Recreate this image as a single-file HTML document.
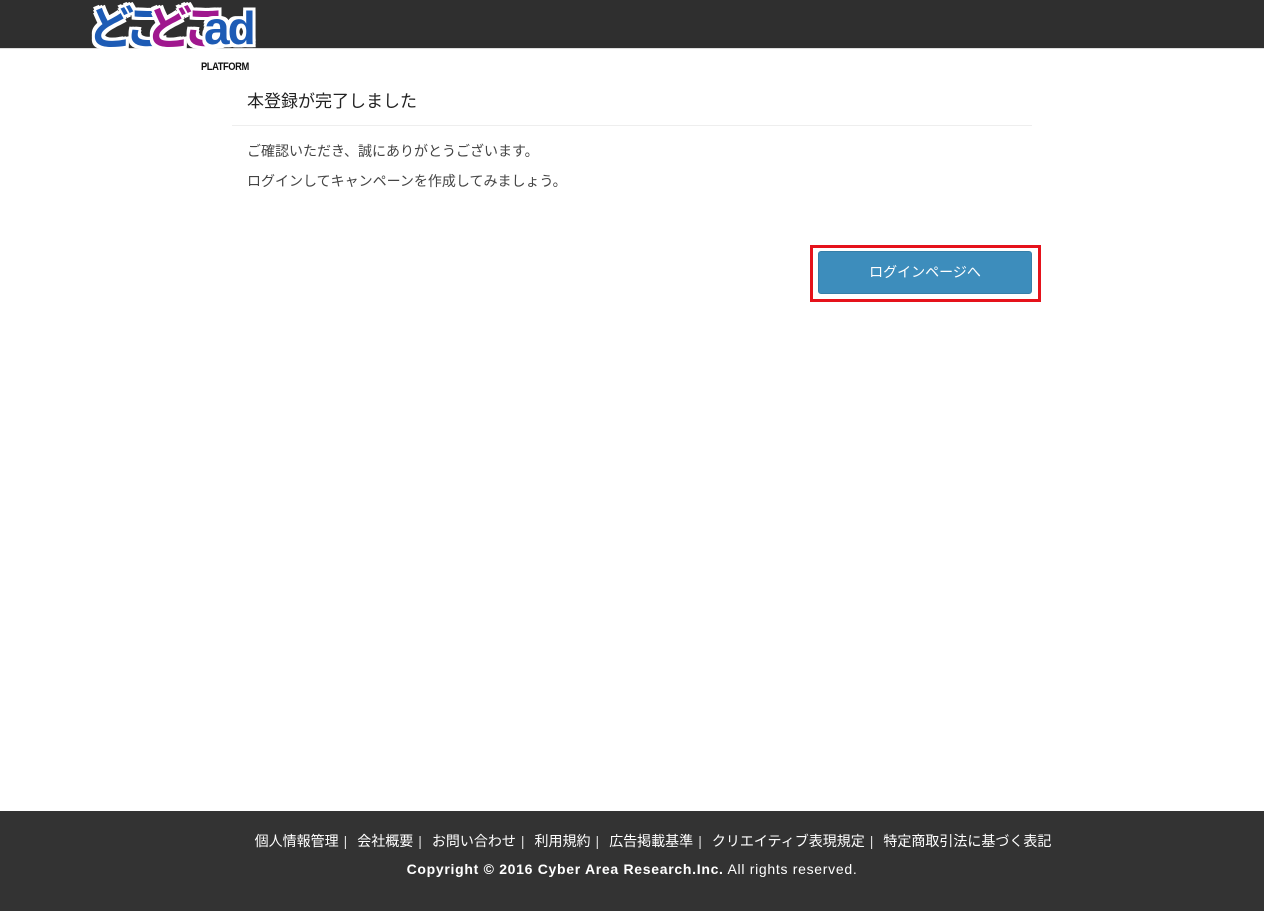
<!DOCTYPE html>
<html><head><meta charset="utf-8"><style>
*{margin:0;padding:0;box-sizing:border-box}
html,body{width:1264px;height:911px;background:#fff;font-family:"Liberation Sans","Noto Sans CJK JP",sans-serif;position:relative;overflow:hidden}
.hdr{position:absolute;left:0;top:0;width:1264px;height:49px;background:#2f2f2f;border-bottom:1px solid #ddd}
.logo{position:absolute;left:86px;top:2px;width:170px;height:72px}
.logo .j{position:absolute;top:-2px;font-weight:bold;font-size:46px;line-height:56px;letter-spacing:-8px;
 text-shadow:-3px -3px 0 #fff,3px -3px 0 #fff,-3px 3px 0 #fff,3px 3px 0 #fff,0 3px 0 #fff,0 -3px 0 #fff,3px 0 0 #fff,-3px 0 0 #fff}
.logo .p{position:absolute;left:115px;top:59px;font-size:11px;font-weight:bold;color:#111;letter-spacing:-0.5px;transform:scaleX(.85);transform-origin:left}
h1{position:absolute;left:247px;top:87px;font-size:17px;font-weight:normal;color:#222}
.hr{position:absolute;left:232px;top:125px;width:800px;height:1px;background:#eee}
.t{position:absolute;left:247px;font-size:14px;color:#444}
.box{position:absolute;left:810px;top:245px;width:231px;height:57px;border:3px solid #e5121b}
.btn{position:absolute;left:818px;top:251px;width:214px;height:43px;background:#3d8dbc;border:1px solid #367fa9;border-radius:3px;color:#fff;font-size:14px;text-align:center;line-height:41px}
.ftr{position:absolute;left:0;top:811px;width:1264px;height:100px;background:#333;color:#fff;text-align:center}
.links{position:absolute;top:20px;width:100%;font-size:14px;left:21px}
.links i{font-style:normal;color:#ddd;margin:0 10px 0 5px}
.copy{position:absolute;top:50px;width:100%;font-size:14px;left:0;letter-spacing:0.7px}
</style></head><body>
<div class="hdr"></div>
<div class="logo">
<span class="j" style="left:2px;color:#1d5bb5">どこ</span>
<span class="j" style="left:60px;color:#a0178e">どこ</span>
<span class="j" style="left:118px;color:#1d5bb5;font-size:46px;letter-spacing:-2px">ad</span>
<span class="p">PLATFORM</span>
</div>
<h1>本登録が完了しました</h1>
<div class="hr"></div>
<div class="t" style="top:141px">ご確認いただき、誠にありがとうございます。</div>
<div class="t" style="top:171px">ログインしてキャンペーンを作成してみましょう。</div>
<div class="box"></div>
<div class="btn">ログインページへ</div>
<div class="ftr">
<div class="links">個人情報管理<i>|</i>会社概要<i>|</i>お問い合わせ<i>|</i>利用規約<i>|</i>広告掲載基準<i>|</i>クリエイティブ表現規定<i>|</i>特定商取引法に基づく表記</div>
<div class="copy"><b>Copyright © 2016 Cyber Area Research.Inc.</b> All rights reserved.</div>
</div>
</body></html>
